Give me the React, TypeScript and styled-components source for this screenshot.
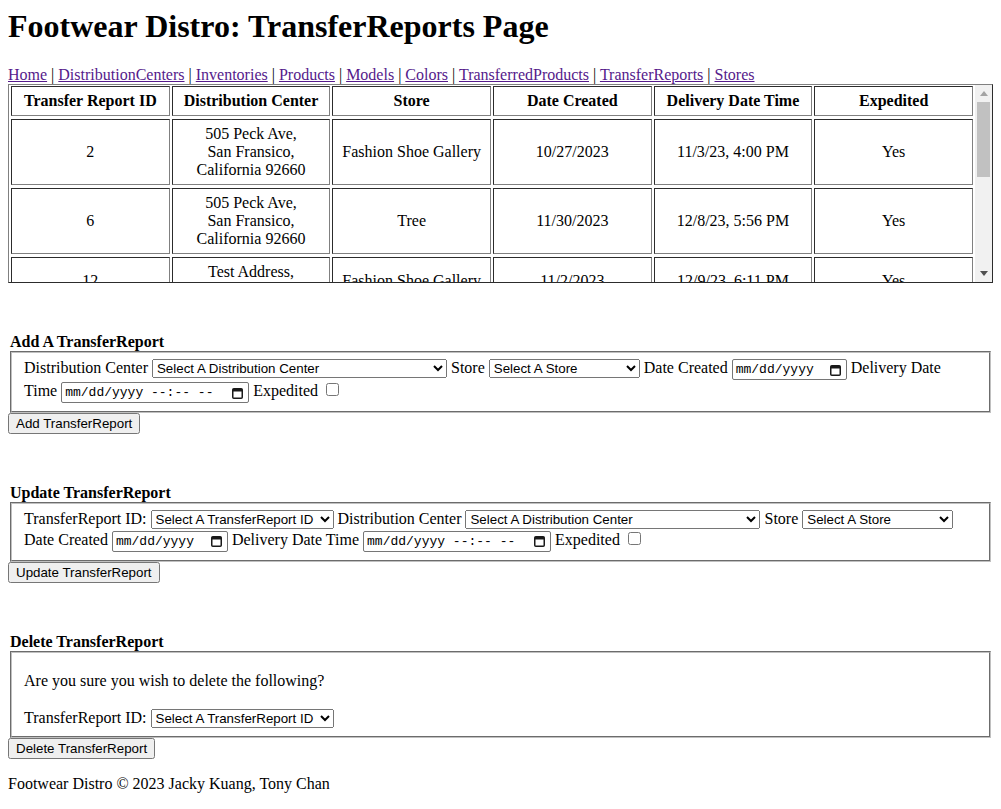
import React from 'react';
import styled, { createGlobalStyle } from 'styled-components';

const GlobalStyle = createGlobalStyle`
  body {
    margin: 8px;
    font-family: "Liberation Serif", "Times New Roman", serif;
    font-size: 16px;
    color: #000;
    background: #fff;
  }
`;

const Title = styled.h1`
  font-size: 32px;
  font-weight: bold;
  margin: 0 0 21.44px;
`;

const NavLink = styled.a`
  color: #551a8b;
  text-decoration: underline;
  cursor: pointer;
`;

const TableFrame = styled.div`
  display: flex;
  height: 197px;
  border: 1px outset gray;
`;

const TableViewport = styled.div`
  flex: 1;
  min-width: 0;
  overflow-y: auto;
  scrollbar-width: none;
`;

const ScrollBar = styled.div`
  width: 17px;
  flex-shrink: 0;
  display: flex;
  flex-direction: column;
  background: #f1f1f1;
`;

const ScrollArrow = styled.div<{ $color: string }>`
  height: 17px;
  display: flex;
  align-items: center;
  justify-content: center;
  color: ${(p) => p.$color};

  svg {
    width: 8px;
    height: 5px;
    fill: currentColor;
  }
`;

const ScrollTrack = styled.div`
  flex: 1;
  padding: 0 2px;
`;

const ScrollThumb = styled.div`
  height: 75px;
  background: #c1c1c1;
`;

const Table = styled.table`
  width: 100%;
  table-layout: fixed;
  border-collapse: separate;
  border-spacing: 2px 3px;
  margin-top: -2px;
`;

const HeadCell = styled.th`
  border: 1px inset gray;
  padding: 5px;
  font-weight: bold;
  text-align: center;
`;

const Cell = styled.td`
  border: 1px inset gray;
  padding: 5px;
  text-align: center;
  vertical-align: middle;
`;

const Form = styled.form`
  margin-top: 50px;
`;

const Legend = styled.legend`
  display: block;
  padding: 0 2px;
  font-weight: bold;
`;

const Fields = styled.fieldset`
  margin: 0 2px;
  padding: 0.35em 0.75em 8px;
  border: 2px groove rgb(192, 192, 192);
`;

const FieldLabel = styled.label``;

const Select = styled.select<{ $width: number }>`
  width: ${(p) => p.$width}px;
  height: 19px;
  font-family: "Liberation Sans", Arial, sans-serif;
  font-size: 13.3333px;
`;

const DateField = styled.span<{ $width: number }>`
  display: inline-flex;
  align-items: center;
  justify-content: space-between;
  box-sizing: border-box;
  width: ${(p) => p.$width}px;
  height: 21px;
  padding: 0 5px 0 3px;
  border: 1px solid #767676;
  border-radius: 2px;
  background: #fff;
  font-family: "Liberation Mono", "Courier New", monospace;
  font-size: 13px;
  white-space: pre;
  color: #000;

  svg {
    width: 11px;
    height: 12px;
    flex-shrink: 0;
  }
`;

const Button = styled.button`
  font-family: "Liberation Sans", Arial, sans-serif;
  font-size: 13.3333px;
`;

const Question = styled.p`
  margin: 14px 0 19px;
`;

const Footer = styled.p`
  margin: 16px 0;
`;

interface TransferReport {
  id: number;
  center: string[];
  store: string;
  created: string;
  delivery: string;
  expedited: string;
}

const peck = ['505 Peck Ave,', 'San Fransico,', 'California 92660'];
const test = ['Test Address,', 'Test City, CA 90001'];

const reports: TransferReport[] = [
  { id: 2, center: peck, store: 'Fashion Shoe Gallery', created: '10/27/2023', delivery: '11/3/23, 4:00 PM', expedited: 'Yes' },
  { id: 6, center: peck, store: 'Tree', created: '11/30/2023', delivery: '12/8/23, 5:56 PM', expedited: 'Yes' },
  { id: 12, center: test, store: 'Fashion Shoe Gallery', created: '11/2/2023', delivery: '12/9/23, 6:11 PM', expedited: 'Yes' },
  { id: 13, center: peck, store: 'Tree', created: '11/5/2023', delivery: '11/12/23, 9:30 AM', expedited: 'No' },
  { id: 14, center: peck, store: 'Fashion Shoe Gallery', created: '11/8/2023', delivery: '11/15/23, 1:45 PM', expedited: 'No' },
  { id: 15, center: test, store: 'Tree', created: '11/20/2023', delivery: '11/28/23, 3:15 PM', expedited: 'Yes' },
];

const pages = ['Home', 'DistributionCenters', 'Inventories', 'Products', 'Models', 'Colors', 'TransferredProducts', 'TransferReports', 'Stores'];

const CalendarIcon = () => (
  <svg viewBox="0 0 11 12" xmlns="http://www.w3.org/2000/svg">
    <rect x="0.75" y="1.75" width="9.5" height="9.5" rx="1" fill="none" stroke="#1a1a1a" strokeWidth="1.5" />
    <rect x="1" y="2" width="9" height="2.5" fill="#1a1a1a" />
  </svg>
);

const DateBox: React.FC<{ width: number; text: string }> = ({ width, text }) => (
  <DateField $width={width} role="textbox">
    <span>{text}</span>
    <CalendarIcon />
  </DateField>
);

const App: React.FC = () => {
  return (
    <>
      <GlobalStyle />
      <Title>Footwear Distro: TransferReports Page</Title>
      <nav>
        {pages.map((page, i) => (
          <React.Fragment key={page}>
            {i > 0 && ' | '}
            <NavLink>{page}</NavLink>
          </React.Fragment>
        ))}
      </nav>

      <TableFrame>
        <TableViewport>
          <Table>
            <thead>
              <tr>
                <HeadCell>Transfer Report ID</HeadCell>
                <HeadCell>Distribution Center</HeadCell>
                <HeadCell>Store</HeadCell>
                <HeadCell>Date Created</HeadCell>
                <HeadCell>Delivery Date Time</HeadCell>
                <HeadCell>Expedited</HeadCell>
              </tr>
            </thead>
            <tbody>
              {reports.map((r) => (
                <tr key={r.id}>
                  <Cell>{r.id}</Cell>
                  <Cell>
                    {r.center.map((line, i) => (
                      <React.Fragment key={i}>
                        {i > 0 && <br />}
                        {line}
                      </React.Fragment>
                    ))}
                  </Cell>
                  <Cell>{r.store}</Cell>
                  <Cell>{r.created}</Cell>
                  <Cell>{r.delivery}</Cell>
                  <Cell>{r.expedited}</Cell>
                </tr>
              ))}
            </tbody>
          </Table>
        </TableViewport>
        <ScrollBar>
          <ScrollArrow $color="#a3a3a3">
            <svg viewBox="0 0 8 5"><polygon points="4,0 8,5 0,5" /></svg>
          </ScrollArrow>
          <ScrollTrack>
            <ScrollThumb />
          </ScrollTrack>
          <ScrollArrow $color="#505050">
            <svg viewBox="0 0 8 5"><polygon points="0,0 8,0 4,5" /></svg>
          </ScrollArrow>
        </ScrollBar>
      </TableFrame>

      <Form onSubmit={(e) => e.preventDefault()}>
        <Legend>Add A TransferReport</Legend>
        <Fields>
          <FieldLabel>Distribution Center</FieldLabel>{' '}
          <Select $width={295}>
            <option>Select A Distribution Center</option>
          </Select>{' '}
          <FieldLabel>Store</FieldLabel>{' '}
          <Select $width={151}>
            <option>Select A Store</option>
          </Select>{' '}
          <FieldLabel>Date Created</FieldLabel>{' '}
          <DateBox width={115} text="mm/dd/yyyy" />{' '}
          <FieldLabel>Delivery Date Time</FieldLabel>{' '}
          <DateBox width={188} text="mm/dd/yyyy --:-- --" />{' '}
          <FieldLabel>Expedited</FieldLabel>{' '}
          <input type="checkbox" />
        </Fields>
        <Button type="submit">Add TransferReport</Button>
      </Form>

      <Form onSubmit={(e) => e.preventDefault()}>
        <Legend>Update TransferReport</Legend>
        <Fields>
          <FieldLabel>TransferReport ID:</FieldLabel>{' '}
          <Select $width={183}>
            <option>Select A TransferReport ID</option>
          </Select>{' '}
          <FieldLabel>Distribution Center</FieldLabel>{' '}
          <Select $width={295}>
            <option>Select A Distribution Center</option>
          </Select>{' '}
          <FieldLabel>Store</FieldLabel>{' '}
          <Select $width={151}>
            <option>Select A Store</option>
          </Select>{' '}
          <FieldLabel>Date Created</FieldLabel>{' '}
          <DateBox width={116} text="mm/dd/yyyy" />{' '}
          <FieldLabel>Delivery Date Time</FieldLabel>{' '}
          <DateBox width={188} text="mm/dd/yyyy --:-- --" />{' '}
          <FieldLabel>Expedited</FieldLabel>{' '}
          <input type="checkbox" />
        </Fields>
        <Button type="submit">Update TransferReport</Button>
      </Form>

      <Form onSubmit={(e) => e.preventDefault()}>
        <Legend>Delete TransferReport</Legend>
        <Fields>
          <Question>Are you sure you wish to delete the following?</Question>
          <FieldLabel>TransferReport ID:</FieldLabel>{' '}
          <Select $width={183}>
            <option>Select A TransferReport ID</option>
          </Select>
        </Fields>
        <Button type="submit">Delete TransferReport</Button>
      </Form>

      <Footer>Footwear Distro © 2023 Jacky Kuang, Tony Chan</Footer>
    </>
  );
};

export default App;
